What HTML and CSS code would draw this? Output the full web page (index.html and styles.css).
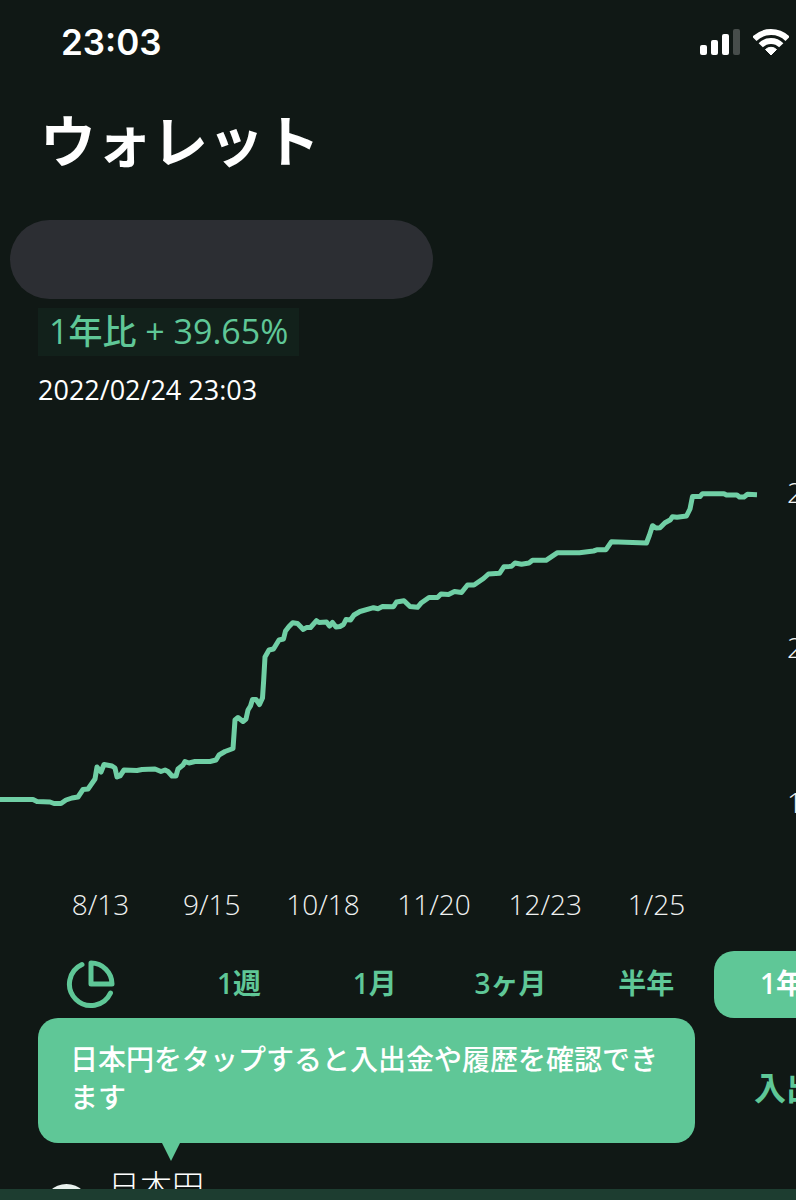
FILE: index.html
```html
<!DOCTYPE html>
<html lang="ja">
<head>
    <meta charset="UTF-8">
    <meta name="viewport" content="width=device-width, initial-scale=1.0">
    <title>ウォレット</title>
    <link rel="stylesheet" href="styles.css">
</head>
<body>
<div class="screen">
    <header class="status-bar">
        <time class="clock">23:03</time>
        <div class="status-icons">
            <svg class="signal" viewBox="0 0 41 26" aria-hidden="true">
                <rect x="0" y="16" width="7" height="10" rx="2"/>
                <rect x="11" y="11" width="7" height="15" rx="2"/>
                <rect x="22" y="5" width="7" height="21" rx="2"/>
                <rect class="off" x="33" y="0" width="7" height="26" rx="2"/>
            </svg>
            <svg class="wifi" viewBox="0 0 36 27" aria-hidden="true">
                <path class="arc" d="M1.4 9.9A23.5 23.5 0 0 1 34.6 9.9"/>
                <path class="arc" d="M7.75 16.25A14.5 14.5 0 0 1 28.25 16.25"/>
                <path class="dot" d="M18 26L12.5 20.5A8 8 0 0 1 23.5 20.5Z"/>
            </svg>
        </div>
    </header>

    <main class="wallet">
        <h1>ウォレット</h1>

        <section class="summary">
            <div class="balance"></div>
            <p class="change">1<span class="period">年比</span> + 39.65%</p>
            <time class="updated">2022/02/24 23:03</time>
        </section>

        <section class="chart">
            <svg class="line" viewBox="0 0 788 440" preserveAspectRatio="none" aria-hidden="true">
                <polyline points="-4,359.5 33,359.5 37,361.5 50,362 54,363.5 61,363.5 66,360 72,358 78,357 83,349.5 88,349 95,339 97,327 101,332 104,324.5 112,326 115,328 117,337 120,336 124,330 137,330.5 142,329.5 155,329 161,331.5 165,330 168,331.5 172,336 176,336 178,329 183,325 185,321.5 189,323 195,321.5 210,321.5 216,320 219,315 225,311.5 233,308.5 235,280 238,277.5 243,281.5 246,279 248,270 250.5,266 252.5,259.5 256,259.5 259.5,264.5 262.5,258 263.7,240 265,217 269,210 273.5,209 279,200 283.5,199 285.5,191 289,186.5 292.7,182.7 297.5,183.5 303.3,189.5 306.5,187.5 310.5,187.5 316.5,180.7 319,182.5 326.5,182 329.5,186 332.5,182.5 336,187 340,186.5 343.5,184.5 346,179.5 350.5,180 354,175 360,171.5 373.5,167.7 378,168.7 382.5,166.5 393.5,166.7 396.5,162 404,160.7 410,166.5 417.5,167.3 421.5,162.7 429,157.5 437.5,157.5 441,154 448.5,154.5 454.5,151.5 461.5,152.5 467.5,145 474,145 483.5,138.5 488.5,134 499.5,133.3 504,126.7 511.5,126.3 515,123 521.5,124.3 529,123 532.5,120.3 546,120.3 557.5,112.7 579.5,112.7 593.5,111 597.5,109.7 606,109.7 611.5,101.7 646.5,103 649.5,95 652.5,85.7 656,88 660,87.7 665,82.7 670.5,79.7 672.5,76.7 677,77.3 686.5,76 690,69 692.5,56.5 700,56.5 702.5,53.7 724,53.7 726.5,55 737,55 739.5,57 744,57 747.5,54.3 757,54.7"/>
            </svg>
            <ol class="y-axis">
                <li>2</li>
                <li>2</li>
                <li>1</li>
            </ol>
        </section>
        <ol class="x-axis">
            <li>8/13</li>
            <li>9/15</li>
            <li>10/18</li>
            <li>11/20</li>
            <li>12/23</li>
            <li>1/25</li>
        </ol>

        <nav class="ranges">
            <button class="pie-btn" type="button" aria-label="内訳">
                <svg viewBox="0 0 50 50" aria-hidden="true">
                    <path d="M16 4.5A21.5 21.5 0 1 0 44.5 33"/>
                    <path d="M25 3V24H46A21 21 0 0 0 25 3Z"/>
                </svg>
            </button>
            <button class="range" type="button">1週</button>
            <button class="range" type="button">1月</button>
            <button class="range" type="button">3ヶ月</button>
            <button class="range" type="button">半年</button>
            <button class="range active" type="button">1年</button>
        </nav>

        <section class="assets">
            <div class="tooltip" role="tooltip">日本円をタップすると入出金や履歴を確認できます</div>
            <button class="transfer" type="button">入出金</button>
            <div class="asset">
                <span class="coin"></span>
                <span class="asset-name">日本円</span>
            </div>
        </section>
    </main>

    <footer class="tab-bar"></footer>
</div>
</body>
</html>
```
FILE: styles.css
```css
* {
    box-sizing: border-box;
}
body {
    margin: 0;
    background: #101815;
    color: #fff;
    font-family: 'Open Sans', 'Noto Sans CJK JP', sans-serif;
}
h1, p, ol {
    margin: 0;
    padding: 0;
}
ol {
    list-style: none;
}
button {
    border: none;
    padding: 0;
    background: none;
    color: #5fc797;
    font-family: inherit;
    white-space: nowrap;
    cursor: pointer;
}
.screen {
    position: relative;
    height: 100vh;
    overflow: hidden;
}

/* status bar */
.status-bar {
    display: flex;
    justify-content: space-between;
    align-items: center;
    height: 84px;
    padding: 0 7px 0 61px;
}
.clock {
    font-family: Inter, sans-serif;
    font-size: 35px;
    font-weight: 600;
    line-height: 40px;
}
.status-icons {
    display: flex;
    gap: 12px;
}
.signal {
    width: 41px;
    height: 26px;
    fill: #fff;
}
.signal .off {
    fill: #474d4b;
}
.wifi {
    width: 36px;
    height: 27px;
}
.wifi .arc {
    fill: none;
    stroke: #fff;
    stroke-width: 6;
}
.wifi .dot {
    fill: #fff;
    stroke: #fff;
    stroke-width: 1;
    stroke-linejoin: round;
}

/* the wallet runs past the right edge of the screen */
.wallet {
    margin-right: -54px;
}
h1 {
    padding: 26px 40px 0;
    font-size: 56px;
    font-weight: 700;
    line-height: 60px;
}
.summary {
    display: flex;
    flex-direction: column;
    align-items: flex-start;
    padding: 50px 38px 0;
}
.balance {
    width: 423px;
    height: 79px;
    margin-left: -28px;
    border-radius: 40px;
    background: #2c2e33;
}
.change {
    height: 48px;
    margin-top: 9px;
    padding: 0 11px;
    background: #12211b;
    color: #5fc797;
    font-size: 34px;
    line-height: 46px;
}
.period {
    font-weight: 500;
}
.updated {
    margin-top: 18px;
    font-size: 27px;
    line-height: 32px;
}

/* chart */
.chart {
    display: flex;
    height: 440px;
    margin-top: 34px;
}
.line {
    flex: 1;
    min-width: 0;
    height: 100%;
}
.line polyline {
    fill: none;
    stroke: #70cfa5;
    stroke-width: 5;
    stroke-linejoin: round;
}
.y-axis {
    width: 63px;
    margin-left: -1px;
    padding-top: 37px;
    color: #f0f2f1;
    font-size: 28px;
    font-weight: 300;
    line-height: 31px;
}
.y-axis li {
    margin-bottom: 124px;
}
.x-axis {
    display: flex;
    margin: 7px 138px 0 45px;
    color: #f0f2f1;
    font-size: 28px;
    font-weight: 300;
    line-height: 34px;
    text-align: center;
}
.x-axis li {
    flex: 1;
}

/* range switch */
.ranges {
    display: flex;
    margin-top: 30px;
}
.pie-btn {
    width: 171px;
    padding-left: 66px;
    text-align: left;
}
.pie-btn svg {
    display: block;
    width: 50px;
    height: 50px;
    fill: none;
    stroke: #5fc797;
    stroke-width: 5;
    stroke-linecap: round;
    stroke-linejoin: round;
}
.range {
    flex: 1;
    height: 67px;
    padding-bottom: 4px;
    border-radius: 20px;
    font-size: 28px;
    font-weight: 600;
    line-height: 34px;
}
.range.active {
    background: #5fc797;
    color: #fff;
}

/* assets */
.assets {
    position: relative;
}
.tooltip {
    position: absolute;
    top: 0;
    left: 38px;
    right: 155px;
    padding: 22px 28px 27px 32px;
    border-radius: 20px;
    background: #5fc797;
    font-size: 28px;
    font-weight: 500;
    line-height: 38px;
}
.tooltip::after {
    content: "";
    position: absolute;
    top: 100%;
    left: 124px;
    border: 9px solid transparent;
    border-top: 18px solid #5fc797;
    border-bottom: 0;
}
.transfer {
    display: block;
    margin-left: auto;
    padding-top: 50px;
    font-size: 32px;
    font-weight: 600;
    line-height: 40px;
}
.asset {
    display: flex;
    gap: 18px;
    padding: 58px 43px 0;
}
.coin {
    width: 47px;
    height: 47px;
    margin-top: 18px;
    border-radius: 50%;
    background: #e9f1ee;
}
.asset-name {
    font-size: 32px;
    font-weight: 300;
    line-height: 40px;
}

.tab-bar {
    position: absolute;
    left: 0;
    right: 0;
    bottom: 0;
    height: 11px;
    background: #1d3d30;
}
```
